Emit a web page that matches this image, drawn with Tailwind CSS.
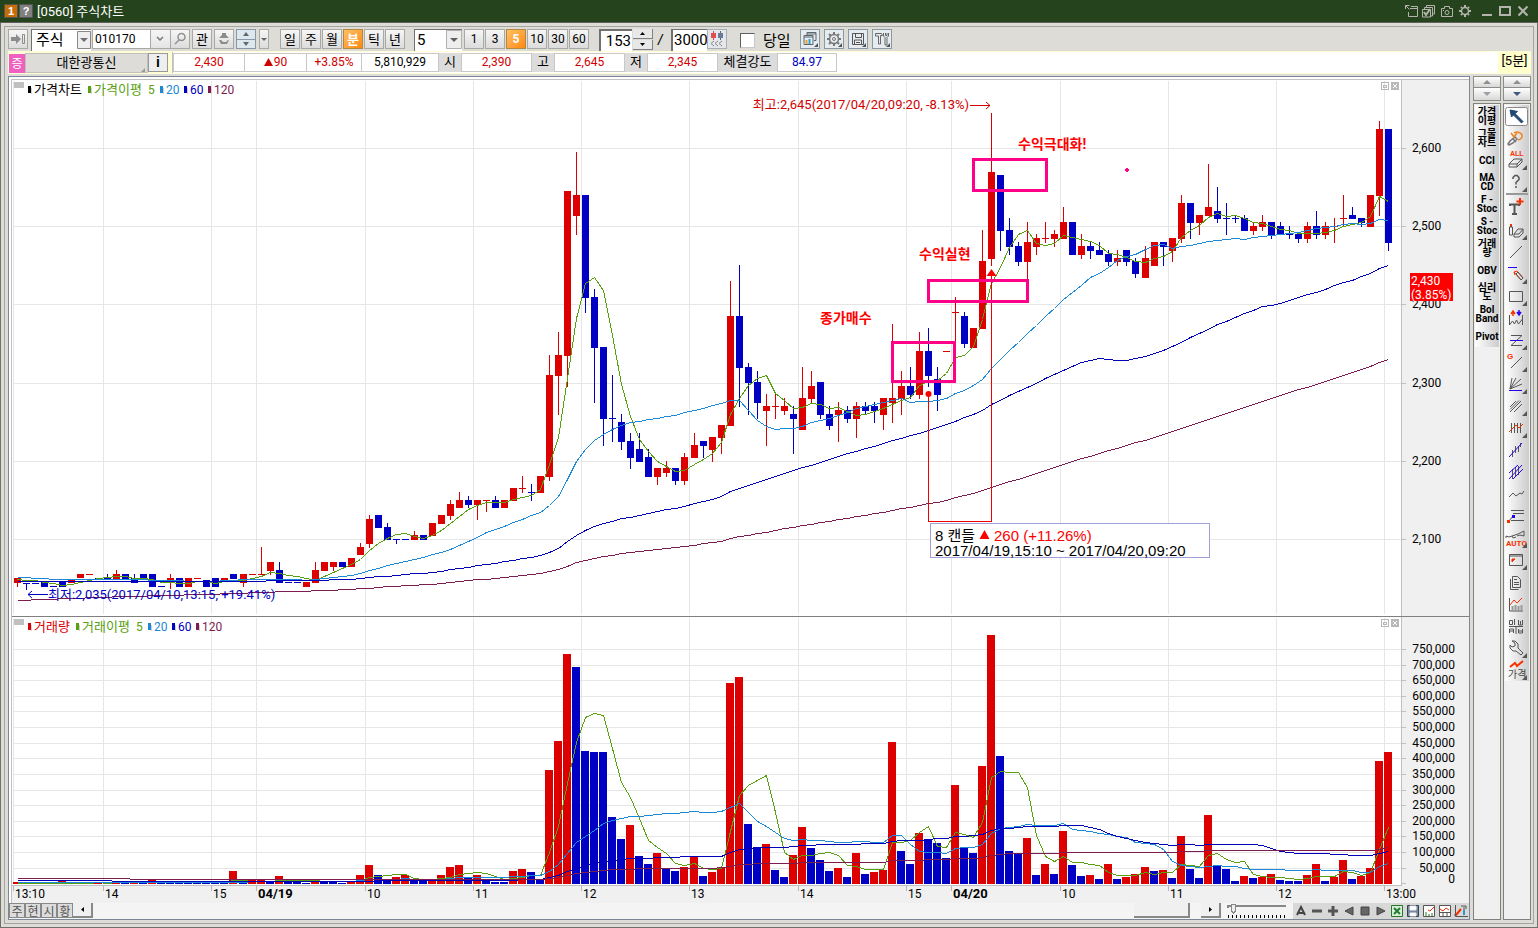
<!DOCTYPE html>
<html lang="ko">
<head>
<meta charset="utf-8">
<title>[0560] 주식차트</title>
<script src="https://cdn.jsdelivr.net/npm/@tailwindcss/browser@4"></script>
</head>
<body class="flex h-screen flex-col overflow-hidden bg-[#dddcd6] font-[Roboto,'Noto_Sans_CJK_KR',sans-serif] text-[13px] text-black">

<header class="flex h-[23px] shrink-0 items-center border-b border-[#60605c] bg-[#25441d] px-[5px] pr-[7px] text-white">
  <span class="flex h-3 w-3 items-center justify-center bg-[#c86c08] font-['Liberation_Sans'] text-[11px] font-bold leading-none outline outline-[#554]">1</span>
  <button class="ml-[3px] flex h-3 w-3 items-center justify-center bg-[#808080] font-['Liberation_Sans'] text-[11px] font-bold leading-none outline outline-[#555]" aria-label="도움말">?</button>
  <h1 class="ml-[5px] font-[Roboto,'Noto_Sans_CJK_KR'] text-[13px] leading-none">[0560] 주식차트</h1>
  <div class="ml-auto flex items-center gap-[2px] text-[#b4b4ac]">
    <button aria-label="분리"><svg class="h-4 w-4" viewBox="0 0 16 16" fill="none" stroke="currentColor"><path d="M2.500 6V2.500h4M2.500 2.500l4 4M7 5.500h7.500M5.500 9v4.500h9V5M8 3.500h6.500V6"/></svg></button>
    <button aria-label="복사"><svg class="h-4 w-4" viewBox="0 0 16 16" fill="none" stroke="currentColor"><path d="M5.500 4V2.500h8V11H12M3.500 6V4.500h8V13H10M1.500 6.500h8v7.500h-8z"/><path d="M3 9l2 3 4-6" stroke-width="2"/></svg></button>
    <button aria-label="캡처"><svg class="h-4 w-4" viewBox="0 0 16 16" fill="none" stroke="currentColor"><path d="M2.500 5.500h3v-2h5v2h3v8h-11z"/><circle cx="8" cy="9.500" r="2"/><path d="M4 7.500h1"/></svg></button>
    <button aria-label="설정"><svg class="h-4 w-4" viewBox="0 0 16 16" fill="none" stroke="currentColor"><circle cx="8" cy="8" r="3.500" stroke-width="1.500"/><path d="M8 2v2M8 12v2M2 8h2M12 8h2M4 4l1 1M11 11l1 1M12 4l-1 1M4 12l1-1" stroke-width="2"/></svg></button>
    <button aria-label="최소화" class="ml-1"><svg class="h-4 w-4" viewBox="0 0 16 16" stroke="currentColor"><path d="M3 12h10" stroke-width="2"/></svg></button>
    <button aria-label="최대화"><svg class="h-4 w-4" viewBox="0 0 16 16" fill="none" stroke="currentColor"><path d="M3 4h10v8H3z" stroke-width="2"/></svg></button>
    <button aria-label="닫기"><svg class="h-4 w-4" viewBox="0 0 16 16" stroke="currentColor"><path d="M3.500 3.500l9 9M12.500 3.500l-9 9" stroke-width="2"/></svg></button>
  </div>
</header>

<div class="flex min-h-0 flex-1 flex-col border border-t-0 border-[#70706c] p-[3px]">
<div class="flex min-h-0 flex-1 flex-col border border-[#a4a4a0] pb-[3px] pl-[3px] pr-[2px]">

  <form class="flex h-6 shrink-0 items-start pt-[2px] font-['Noto_Sans_CJK_KR'] text-[12px]" onsubmit="return false">
    <button aria-label="펼치기" class="h-5 w-5 border border-[#a8a8a4] bg-linear-to-b from-[#f6f6f6] to-[#dcdcdc]"><svg viewBox="0 0 18 18" class="h-[18px] w-[18px]" fill="#8c8c8c"><path d="M2 7h5V4l5 5-5 5v-3H2z"/><path d="M13.500 4.500h2v9h-2z" fill="none" stroke="#8c8c8c"/></svg></button>
    <label class="relative ml-[3px] block h-[22px] w-[60px] border-l border-t border-[#707070] bg-white">
      <span class="sr-only">종목 구분</span>
      <select class="h-[21px] w-full appearance-none bg-transparent pl-1 font-[Roboto,'Noto_Sans_CJK_KR'] text-[15px] leading-[21px] outline-none"><option>주식</option></select>
      <svg class="pointer-events-none absolute right-0 top-px h-[18px] w-[14px] bg-[#eee]" viewBox="0 0 14 18"><path d="M.5.500h13v17H.5z" fill="none" stroke="#888"/><path d="M3 7h8l-4 4z" fill="#707070"/></svg>
    </label>
    <input aria-label="종목코드" value="010170" class="ml-px h-5 w-[59px] border border-[#a8a8a4] bg-white pl-[2px] font-[Roboto] text-[12px] outline-none">
    <button aria-label="종목 목록" class="h-5 w-[19px] border-y border-[#a8a8a4] bg-linear-to-b from-[#f6f6f6] to-[#e4e4e4]"><svg viewBox="0 0 18 18" class="h-[18px] w-[18px]" fill="none" stroke="#777" stroke-width="1.500"><path d="M6 7l3 3 3-3"/></svg></button>
    <button aria-label="검색" class="h-5 w-5 border border-[#a8a8a4] bg-linear-to-b from-[#f6f6f6] to-[#dcdcdc]"><svg viewBox="0 0 18 18" class="h-[18px] w-[18px]" fill="none" stroke="#909090" stroke-width="1.500"><circle cx="10.500" cy="7" r="3.500"/><path d="M8 10l-4 4"/></svg></button>
    <button class="ml-[2px] h-5 w-5 border border-[#a8a8a4] bg-linear-to-b from-[#f6f6f6] to-[#dcdcdc] text-[13px] leading-[18px]">관</button>
    <button aria-label="알림" class="ml-[2px] h-5 w-5 border border-[#a8a8a4] bg-linear-to-b from-[#f6f6f6] to-[#dcdcdc]"><svg viewBox="0 0 18 18" class="h-[18px] w-[18px]" fill="#8c8c8c"><path d="M7 3h4v2l3 3H4l3-3zM4 10h2l2 2h3l2-2h1l-2 4H6z"/></svg></button>
    <div class="ml-[2px] flex h-5 w-5 flex-col border border-[#8898a4] bg-[#dde8ee]">
      <button aria-label="이전" class="flex flex-1 items-center justify-center border-b border-[#8898a4]"><svg class="h-1 w-[6px]" viewBox="0 0 6 4" fill="#606870"><path d="M0 4l3-4 3 4z"/></svg></button>
      <button aria-label="다음" class="flex flex-1 items-center justify-center"><svg class="h-1 w-[6px]" viewBox="0 0 6 4" fill="#606870"><path d="M0 0h6L3 4z"/></svg></button>
    </div>
    <button aria-label="더보기" class="ml-[3px] flex h-5 w-[10px] items-center justify-center border border-[#a8a8a4] bg-linear-to-b from-[#f6f6f6] to-[#dcdcdc]"><svg class="h-[3px] w-[6px]" viewBox="0 0 6 3" fill="#666"><path d="M0 0h6L3 3z"/></svg></button>
    <div class="ml-[11px] flex gap-px text-[13px]">
      <button class="h-5 w-5 border border-[#a8a8a4] bg-linear-to-b from-[#f6f6f6] to-[#dcdcdc] leading-[18px]">일</button>
      <button class="h-5 w-5 border border-[#a8a8a4] bg-linear-to-b from-[#f6f6f6] to-[#dcdcdc] leading-[18px]">주</button>
      <button class="h-5 w-5 border border-[#a8a8a4] bg-linear-to-b from-[#f6f6f6] to-[#dcdcdc] leading-[18px]">월</button>
      <button class="h-5 w-5 border border-[#b08840] bg-linear-to-br from-[#ffc060] to-[#ff8800] font-bold leading-[18px] text-white">분</button>
      <button class="h-5 w-5 border border-[#a8a8a4] bg-linear-to-b from-[#f6f6f6] to-[#dcdcdc] leading-[18px]">틱</button>
      <button class="h-5 w-5 border border-[#a8a8a4] bg-linear-to-b from-[#f6f6f6] to-[#dcdcdc] leading-[18px]">년</button>
    </div>
    <label class="relative ml-[9px] block h-[22px] w-[48px] border-l border-t border-[#707070] bg-white">
      <span class="sr-only">분 간격</span>
      <select class="h-[21px] w-full appearance-none bg-transparent pl-[2px] font-[Roboto] text-[15px] leading-[21px] outline-none"><option>5</option></select>
      <svg class="pointer-events-none absolute right-0 top-0 h-[19px] w-4 bg-[#eee]" viewBox="0 0 16 19"><path d="M.5.500h15v18H.5z" fill="none" stroke="#b0b0ac"/><path d="M4 8h8l-4 4z" fill="#606060"/></svg>
    </label>
    <div class="ml-[2px] flex gap-px font-[Roboto] text-[12px]">
      <button class="h-5 w-5 border border-[#a8a8a4] bg-linear-to-b from-[#f6f6f6] to-[#dcdcdc] leading-[18px]">1</button>
      <button class="h-5 w-5 border border-[#a8a8a4] bg-linear-to-b from-[#f6f6f6] to-[#dcdcdc] leading-[18px]">3</button>
      <button class="h-5 w-5 border border-[#b08840] bg-linear-to-br from-[#ffc060] to-[#ff8800] font-bold leading-[18px] text-white">5</button>
      <button class="h-5 w-5 border border-[#a8a8a4] bg-linear-to-b from-[#f6f6f6] to-[#dcdcdc] leading-[18px]">10</button>
      <button class="h-5 w-5 border border-[#a8a8a4] bg-linear-to-b from-[#f6f6f6] to-[#dcdcdc] leading-[18px]">30</button>
      <button class="h-5 w-5 border border-[#a8a8a4] bg-linear-to-b from-[#f6f6f6] to-[#dcdcdc] leading-[18px]">60</button>
    </div>
    <input aria-label="표시 개수" value="153" class="ml-[10px] h-[22px] w-[33px] border-l-2 border-t-2 border-[#707070] bg-white pr-px text-right font-[Roboto] text-[15px] outline-none">
    <div class="flex h-[21px] w-[21px] flex-col gap-px pl-px">
      <button aria-label="증가" class="flex flex-1 items-center justify-center border-b border-r border-[#808080] bg-[#e8e8e8]"><svg class="h-[3px] w-[5px]" viewBox="0 0 5 3"><path d="M0 3l2.500-3L5 3z"/></svg></button>
      <button aria-label="감소" class="flex flex-1 items-center justify-center border-b border-r border-[#808080] bg-[#e8e8e8]"><svg class="h-[3px] w-[5px]" viewBox="0 0 5 3"><path d="M0 0h5L2.500 3z"/></svg></button>
    </div>
    <span class="ml-[5px] w-[13px] font-['Liberation_Sans'] text-[15px] italic leading-[22px]">/</span>
    <input aria-label="전체 개수" value="3000" class="h-[22px] w-[36px] border-l-2 border-t border-[#707070] bg-white pl-px font-[Roboto] text-[15px] outline-none">
    <button aria-label="과거 조회" class="h-5 w-5 border border-[#a8b0b4] bg-[#e4e8ec]"><svg viewBox="0 0 18 18" class="h-[18px] w-[18px]"><path d="M5.500 1v9" stroke="#d44"/><path d="M3 3h5v5H3z" fill="#e05050"/><path d="M12.500 1v9" stroke="#567"/><path d="M10 3h5v5h-5z" fill="#667c98"/><path d="M6 11l-3 2.500L6 16M10 11l-3 2.500 3 2.500M14 11l-3 2.500 3 2.500" fill="none" stroke="#888"/></svg></button>
    <label class="ml-[13px] flex h-[22px] items-center gap-2 text-[15px]"><input type="checkbox" class="h-[15px] w-[15px] appearance-none border border-[#c8c8c8] border-l-[#606060] border-t-[#606060] bg-white">당일</label>
    <div class="ml-[9px] flex gap-1">
      <button aria-label="차트 창" class="h-5 w-5 border border-[#8898a4] bg-[#e6ebef]"><svg viewBox="0 0 18 18" class="h-[18px] w-[18px]" fill="none" stroke="#5c6470"><path d="M6 5V2.500h9v8H13M6 4h9M3 13.500v-8h9v9H3zM3 7h9"/><path d="M5.500 14v-4" stroke="#f0a020" stroke-width="2"/><path d="M8.500 14V9" stroke="#28a0d8" stroke-width="2"/><path d="M17 13v4h-4z" fill="#555" stroke="none"/></svg></button>
      <button aria-label="차트 설정" class="h-5 w-5 border border-[#8898a4] bg-[#e6ebef]"><svg viewBox="0 0 18 18" class="h-[18px] w-[18px]" fill="none" stroke="#777"><circle cx="9" cy="9" r="4.500" stroke-width="1.500"/><circle cx="9" cy="9" r="1.500"/><path d="M9 2v2M9 14v2M2 9h2M14 9h2M4 4l1.500 1.500M12.500 12.500L14 14M14 4l-1.500 1.500M4 14l1.500-1.500" stroke-width="2"/><path d="M17 13v4h-4z" fill="#555" stroke="none"/></svg></button>
      <button aria-label="저장" class="h-5 w-5 border border-[#8898a4] bg-[#e6ebef]"><svg viewBox="0 0 18 18" class="h-[18px] w-[18px]" fill="none" stroke="#555"><path d="M3.500 3.500h11v11h-11zM6.500 4v3.500h6V4M5.500 14v-4h7v4M7 12.500h4"/><path d="M17 13v4h-4z" fill="#555" stroke="none"/></svg></button>
      <button aria-label="도구" class="h-5 w-5 border border-[#8898a4] bg-[#e6ebef]"><svg viewBox="0 0 18 18" class="h-[18px] w-[18px]" fill="none" stroke="#666"><path d="M2.500 3.500h6l1 2H7.500V14h-2V6h-3zM10.500 3v3l1.500 1.500V15h2V7.500L15.500 6V3M12.500 3v2.500h1.500V3"/><path d="M17 13v4h-4z" fill="#555" stroke="none"/></svg></button>
    </div>
  </form>

  <section aria-label="현재가" class="flex h-[23px] shrink-0 border-y border-[#fffcd8] bg-white leading-[17px]">
    <div class="flex w-[164px] shrink-0 bg-[#fffdd4] pt-px">
      <span class="ml-px mt-px h-[19px] w-4 bg-[#f060c0] text-center font-['Noto_Sans_CJK_KR'] text-[12px] leading-[18px] text-white">증</span>
      <button class="relative h-5 w-[123px] border border-[#c0c0b8] bg-[#dddcd8] text-center leading-[18px]">대한광통신<svg class="absolute bottom-0 right-[2px] h-1 w-1" viewBox="0 0 4 4" fill="#999"><path d="M4 0v4H0z"/></svg></button>
      <button aria-label="종목정보" class="h-[19px] w-5 border border-[#999] bg-[#eee] font-['Liberation_Sans'] text-[14px] font-bold leading-[17px]">i</button>
    </div>
    <div class="flex border-l border-[#c0c0c0] pt-px text-center text-[12px]">
      <span class="h-[19px] w-[72px] border border-[#c8c8c8] text-[#d00000]">2,430</span>
      <span class="h-[19px] w-[62px] border border-l-0 border-[#c8c8c8] text-[#d00000]"><svg class="mr-px inline h-2 w-[9px] align-baseline" viewBox="0 0 9 8" fill="#d00000"><path d="M4.500 0L9 8H0z"/></svg>90</span>
      <span class="h-[19px] w-[55px] border border-l-0 border-[#c8c8c8] text-[#d00000]">+3.85%</span>
      <span class="h-[19px] w-[77px] border border-l-0 border-[#c8c8c8]">5,810,929</span>
      <span class="h-[19px] w-[22px] bg-[#dcdcdc] text-[13px]">시</span>
      <span class="h-[19px] w-[71px] border border-[#c8c8c8] text-[#d00000]">2,390</span>
      <span class="h-[19px] w-[22px] bg-[#dcdcdc] text-[13px]">고</span>
      <span class="h-[19px] w-[71px] border border-[#c8c8c8] text-[#d00000]">2,645</span>
      <span class="h-[19px] w-[22px] bg-[#dcdcdc] text-[13px]">저</span>
      <span class="h-[19px] w-[71px] border border-[#c8c8c8] text-[#d00000]">2,345</span>
      <span class="h-[19px] w-[59px] bg-[#dcdcdc] text-[13px]">체결강도</span>
      <span class="h-[19px] w-[60px] border border-[#c8c8c8] text-[#0000c0]">84.97</span>
    </div>
    <span class="ml-auto w-[33px] bg-[#ffffcc] text-center text-[13px]">[5분]</span>
  </section>

  <main class="mt-[2px] flex min-h-0 flex-1 gap-[3px]">
    <section class="flex min-w-0 flex-1 flex-col border border-[#7c8898] bg-white pl-[2px] pt-[2px]">
      <svg id="chart" class="min-h-0 w-full flex-1 border-l border-t border-[#c0c0c0] text-[13px]" viewBox="12 80 1457 823" preserveAspectRatio="xMinYMin meet" role="img" aria-label="가격차트와 거래량"></svg>
      <div class="flex h-4 shrink-0 bg-[#f4f4f4] text-[12px] leading-[13px]">
        <div class="-ml-[2px] flex font-['Noto_Sans_CJK_KR'] text-[#555]">
          <button class="h-[15px] w-4 border border-[#888] bg-[#dcdcdc] leading-[12px]">주</button>
          <button class="h-[15px] w-4 border border-[#888] bg-[#dcdcdc] leading-[12px]">현</button>
          <button class="h-[15px] w-4 border border-[#888] bg-[#dcdcdc] leading-[12px]">시</button>
          <button class="h-[15px] w-4 border border-[#888] bg-[#dcdcdc] leading-[12px]">황</button>
        </div>
        <button aria-label="왼쪽으로" class="flex h-[15px] w-5 items-center justify-center border-b-2 border-r-2 border-[#888] bg-[#f0f0f0]"><svg class="h-[5px] w-[3px]" viewBox="0 0 3 5"><path d="M3 0v5L0 2.500z"/></svg></button>
        <div class="flex flex-1 justify-end pr-[11px]"><div class="h-[15px] w-14 border-b-2 border-r-2 border-[#888] bg-[#f0f0f0]"></div></div>
        <button aria-label="오른쪽으로" class="flex h-[15px] w-5 items-center justify-center border-b-2 border-r-2 border-[#888] bg-[#f0f0f0]"><svg class="h-[5px] w-[3px]" viewBox="0 0 3 5"><path d="M0 0v5l3-2.500z"/></svg></button>
        <svg class="ml-[5px] h-[15px] w-16" viewBox="1226 903 64 15" shape-rendering="crispEdges"><path d="M1227.500 908v-2.500H1286" fill="none" stroke="#888" stroke-width="2"/><path d="M1231.500 904v7l2 2 2-2v-7z" fill="#eee" stroke="#888"/><path d="M1228 916.500h60" stroke="#000" stroke-width="3" stroke-dasharray="1 3"/></svg>
        <div id="tools" class="ml-[3px] flex w-[176px] bg-[#d8d8d8]"></div>
      </div>
    </section>

    <aside aria-label="지표" class="flex w-7 shrink-0 flex-col">
      <button aria-label="지표 위로" class="flex h-3 items-center justify-center border border-[#8c8c88] bg-linear-to-b from-white to-[#d8d8d8]"><svg class="h-1 w-2" viewBox="0 0 8 4" fill="#909090"><path d="M4 0l4 4H0z"/></svg></button>
      <button aria-label="지표 아래로" class="flex h-[13px] items-center justify-center border border-t-0 border-[#8c8c88] bg-linear-to-b from-white to-[#d8d8d8]"><svg class="h-1 w-2" viewBox="0 0 8 4" fill="#a0a0a0"><path d="M0 0h8L4 4z"/></svg></button>
      <div id="indicators" class="mt-[2px] flex flex-1 flex-col border border-[#80807c] bg-[#f0f0f0]"></div>
    </aside>

    <aside aria-label="그리기 도구" class="-ml-px flex w-7 shrink-0 flex-col">
      <button aria-label="도구 위로" class="flex h-3 items-center justify-center border border-[#8c8c88] bg-linear-to-b from-white to-[#d8d8d8]"><svg class="h-1 w-2" viewBox="0 0 8 4" fill="#909090"><path d="M4 0l4 4H0z"/></svg></button>
      <button aria-label="도구 아래로" class="flex h-[13px] items-center justify-center border border-t-0 border-[#8c8c88] bg-linear-to-b from-white to-[#d8d8d8]"><svg class="h-1 w-2" viewBox="0 0 8 4" fill="#405880"><path d="M0 0h8L4 4z"/></svg></button>
      <div id="drawing" class="mt-[2px] flex flex-1 flex-col border border-[#80807c] bg-[#f0f0f0]"></div>
    </aside>
  </main>
</div>
</div>

<script>
// Candles: direction, high, body top, body bottom, low (chart units, y grows downward)
const candles = `r578,578,583,587 b583,583,584,590 b583,583,584,584 b581,581,587,587 b586,586,587,587 b582,582,587,587 r579,579,583,583 r574,574,578,578 r574,574,575,575 b578,578,579,579
b574,578,579,579 r570,574,579,579 b574,574,579,579 b574,578,583,583 b574,574,578,578 b574,574,587,587 b586,586,587,587 r574,578,581,589 b578,578,587,587 r578,578,587,587
r578,578,579,579 b580,580,587,587 b578,578,587,587 r578,578,582,582 b574,574,579,579 r574,574,583,587 r574,574,575,575 r547,574,575,575 r562,562,571,575 b562,570,583,583
b582,582,583,583 b582,582,583,583 r582,582,587,587 r562,570,583,583 r562,562,571,571 r562,562,567,571 b562,562,567,567 r558,558,567,567 r543,547,555,555 r515,519,544,548
b515,515,528,528 b523,527,540,540 b539,539,540,544 b539,539,540,540 r531,535,540,540 b535,535,540,540 r523,523,536,536 r515,515,524,524 r500,504,516,520 r492,500,508,508
b496,500,505,508 r500,500,505,520 r500,500,501,512 b496,500,508,508 r500,500,508,508 r488,488,501,501 r476,488,489,493 b484,492,493,501 r476,476,493,493 r355,375,477,481
r332,355,376,415 r191,191,356,387 r152,195,216,235 b195,195,298,313 b289,297,348,403 b347,347,419,446 b375,418,419,442 b414,422,442,450 b433,441,458,469 b433,449,462,462
b449,457,477,477 r468,468,477,485 r461,468,473,477 b468,468,481,485 r453,457,481,485 r433,445,458,458 b441,441,446,458 r437,437,450,462 r425,425,438,454 r281,316,426,426
b265,316,368,407 b363,367,383,415 b371,382,403,419 r394,406,411,446 r394,406,407,419 r398,406,411,415 b406,414,419,454 r367,398,430,430 r371,386,399,403 b382,382,415,419
b406,414,426,430 r402,410,415,442 b406,410,419,423 r402,406,419,438 b402,406,411,415 b402,406,411,423 r398,398,415,430 r324,398,403,423 r371,386,399,415 b367,386,395,399
r332,351,395,399 b328,351,376,387 b367,379,395,411 r351,351,352,352 r297,312,313,342 b312,316,344,348 r328,328,348,348 r230,261,329,329 r113,172,259,266 b175,175,231,251
b218,230,247,255 b242,246,262,266 r222,242,262,280 r234,238,247,255 r222,238,239,243 r230,234,239,247 r207,222,239,239 b222,222,255,255 r234,246,255,259 b242,246,251,259
b242,250,255,255 b250,254,262,266 r250,258,262,266 b250,250,262,266 b258,261,274,278 r246,258,278,278 r242,242,266,266 b242,242,247,266 r238,238,251,262 r195,203,239,243
b203,203,223,239 r215,215,223,235 r164,207,216,216 b187,211,219,223 b203,218,219,235 b215,218,219,223 b215,218,231,231 r222,226,231,235 r215,222,227,231 b222,222,236,239
b222,226,235,235 b226,234,235,239 b234,234,239,243 r222,226,239,243 b211,226,235,239 r222,226,235,239 r218,226,227,243 r195,218,219,226 b207,215,219,219 b218,218,223,227
r195,195,227,227 r121,129,196,216 b129,129,243,251`.split(/\s+/).map(s => [s[0], ...s.slice(1).split(',').map(Number)]);

// Top edge of each volume bar
const volumes = `882 883 883 883 883 881 883 883 883 882 883 881 883 881 883 880 882 882 882 882 882 882 882 882 871 881 880 880 881 876 881 881 883 879 881 881 883 881 875 865
875 880 877 875 881 881 880 875 867 865 877 875 880 882 882 871 869 872 880 770 741 654 667 751 752 752 817 839 825 856 864 853 869 871 867 857 876 872 867 683
677 824 847 844 870 877 855 827 848 860 871 868 877 853 874 872 870 742 851 864 833 839 843 858 785 847 853 766 635 756 851 853 838 875 864 874 831 865 876 875
879 864 879 877 874 867 871 870 878 836 869 878 815 865 869 881 876 878 877 874 880 881 881 875 864 881 877 860 879 876 868 761 752`.split(/\s+/).map(Number);

const RED = '#dc0000', BLUE = '#0000c4';
const x = i => 17 + Math.round(i * 9.02);
const rect = (a, b, w, h, f) => `<rect x="${a}" y="${b}" width="${w}" height="${h}" fill="${f}"/>`;
const average = (data, n, before) => {
  const all = [...Array.from({ length: n }, (_, k) => before(k)), ...data];
  return data.map((_, i) => { let s = 0; for (let k = i + 1; k <= i + n; k++) s += all[k]; return s / n; });
};
const line = (ys, c) => `<polyline fill="none" stroke="${c}" points="${ys.map((y, i) => x(i) + '.5,' + (Math.round(y) + .5)).join(' ')}"/>`;
const text = (a, b, s, c = '#000', extra = '') => `<text x="${a}" y="${b}" fill="${c}" ${extra}>${s}</text>`;

let o = rect(12, 80, 1390, 806, '#fff') + rect(1402, 80, 67, 823, '#f0f0f0') + rect(12, 886, 1457, 17, '#f0f0f0');
const hours = [[13, '13:10'], [103, '14'], [211, '15'], [256, '04/19'], [365, '10'], [473, '11'], [581, '12'], [689, '13'], [798, '14'], [906, '15'], [951, '04/20'], [1060, '10'], [1168, '11'], [1276, '12'], [1384, '13:00']];
const prices = [2600, 2500, 2400, 2300, 2200, 2100];
let g = '', t = '';
hours.forEach(([h, s]) => {
  g += rect(h, 81, 1, 533, '#e6e6e6') + rect(h, 618, 1, 266, '#e6e6e6') + rect(h, 886, 1, 5, '#b8b8b8');
  t += text(h + 2, 898, s, '#000', s.includes('/') ? 'class="text-[13px] font-bold"' : 'class="text-[12px]"');
});
prices.forEach((p, k) => {
  const y = Math.round(148 + k * 78.2);
  g += rect(13, y, 1388, 1, '#e6e6e6') + rect(1402, y, 4, 1, '#c0c0c0');
  t += text(1412, y + 4, p.toLocaleString('en-US'), '#000', 'class="text-[12px]"');
});
for (let k = 0; k < 16; k++) {
  const y = Math.round(649 + k * 15.62), v = 750000 - k * 50000;
  if (v) g += rect(13, y, 1388, 1, '#e6e6e6');
  g += rect(1402, y, 4, 1, '#c0c0c0');
  t += text(1455, v ? y + 4 : 883, v.toLocaleString('en-US'), '#000', 'text-anchor="end" class="text-[12px]"');
}
g += rect(1401, 80, 1, 806, '#c0c0c0') + rect(12, 885, 1390, 1, '#c0c0c0') + rect(12, 616, 1457, 1, '#808080');

candles.forEach(([d, hi, top, bot, lo], i) => {
  const c = d === 'r' ? RED : BLUE;
  g += rect(x(i), hi, 1, Math.max(1, lo - hi), c) + rect(x(i) - 3, top, 7, bot - top, c);
});
let vc = RED;
volumes.forEach((v, i) => {
  if (i && v < volumes[i - 1]) vc = RED;
  if (i && v > volumes[i - 1]) vc = BLUE;
  g += rect(x(i) - 4, v, 8, 884 - v, vc);
});
const close = candles.map(c => c[0] === 'r' ? c[2] : c[3] - 1);
g += line(average(close, 5, () => 579), '#58a010') + line(average(close, 20, () => 577), '#1c88d8')
   + line(average(close, 60, () => 581), '#0000b8') + line(average(close, 120, k => 619 - k * 38 / 120), '#7c1c50');
g += line(average(volumes, 5, () => 883), '#58a010') + line(average(volumes, 20, () => 882), '#1c88d8')
   + line(average(volumes, 60, () => 880), '#0000b8') + line(average(volumes, 120, () => 878), '#7c1c50');

// Measured range, marker boxes
g += '<path d="M928.500 394v127.500h63V275" fill="none" stroke="#f00000"/>';
g += '<g fill="none" stroke="#ff0088" stroke-width="3"><rect x="892.500" y="342.500" width="62" height="39"/><rect x="928.500" y="280.500" width="99" height="21"/><rect x="973.500" y="159.500" width="73" height="31"/></g>';
g += rect(1125, 169, 4, 2, '#ff0088') + rect(1126, 168, 2, 4, '#ff0088');
g += '<rect x="930.500" y="523.500" width="279" height="34" fill="#fff" stroke="#a0a0d8"/>';
// Panel handles and window boxes
[82, 619].forEach(y => {
  g += rect(14, y, 10, 6, '#c0c0c0');
  g += `<path d="M1381.500 ${y + .5}h7v7h-7zM1383.500 ${y + 3.5}h3v2h-3z" fill="none" stroke="#b8b8b8"/>` + rect(1391, y, 8, 8, '#b8b8b8');
  t += `<path d="M1393 ${y + 2}l4 4M1397 ${y + 2}l-4 4" stroke="#fff"/>`;
});
[[85, ['#000', '#58a010', '#1c88d8', '#0000c0', '#7c1c50'], [28, 88, 160, 184, 208]], [622, [RED, '#58a010', '#1c88d8', '#0000c0', '#7c1c50'], [28, 76, 148, 172, 196]]]
  .forEach(([y, cs, xs]) => cs.forEach((c, k) => { g += rect(xs[k], y + 1, 3, 7, c) + rect(xs[k] + 3, y + 3, 1, 6, '#d0d0d0'); }));

const legend = (y, xs, labels, cs) => labels.forEach((s, k) => t += text(xs[k], y, s, cs[k], k > 1 ? 'class="text-[12px]"' : ''));
legend(94, [34, 94, 148, 166, 190, 214], ['가격차트', '가격이평', '5', '20', '60', '120'], ['#000', '#58a010', '#58a010', '#1c88d8', '#0000c0', '#7c1c50']);
legend(631, [34, 82, 136, 154, 178, 202], ['거래량', '거래이평', '5', '20', '60', '120'], [RED, '#58a010', '#58a010', '#1c88d8', '#0000c0', '#7c1c50']);

t += text(969, 109, '최고:2,645(2017/04/20,09:20, -8.13%)', '#d00000', 'text-anchor="end"') + '<path d="M970 105.500h20M986 102l4 3.500-4 3.500" fill="none" stroke="#d00000"/>';
t += text(48, 599, '최저:2,035(2017/04/10,13:15, +19.41%)', '#0000c0') + '<path d="M48 594.500H28M32 591l-4 3.500 4 3.500" fill="none" stroke="#0000c0"/>';
t += text(820, 323, '종가매수', '#f00', 'class="text-[14px] font-bold"') + text(919, 259, '수익실현', '#f00', 'class="text-[14px] font-bold"') + text(1018, 149, '수익극대화!', '#f00', 'class="text-[14px] font-bold"');
t += '<circle cx="928.500" cy="394" r="3" fill="#f00"/><path d="M991.500 269l5 7h-10zM984.500 530l5 9h-10z" fill="#f00"/>';
t += text(935, 541, '8 캔들', '#000', `class="font-['Liberation_Sans','Noto_Sans_CJK_KR'] text-[15px]"`) + text(994, 541, '260 (+11.26%)', '#f00', `class="font-['Liberation_Sans'] text-[15px]"`) + text(935, 556, '2017/04/19,15:10 ~ 2017/04/20,09:20', '#000', `class="font-['Liberation_Sans'] text-[15px]"`);
t += rect(1410, 273, 43, 28, '#f00') + text(1411, 285, '2,430', '#fff', 'class="text-[12px]"') + text(1411, 299, '(3.85%)', '#fff', 'class="text-[12px]"');
document.getElementById('chart').innerHTML = o + `<g shape-rendering="crispEdges">${g}</g>` + t;

document.getElementById('indicators').innerHTML = '<div class="mx-px mt-px flex flex-col bg-linear-to-r from-white to-[#cccccc]">' +
  ['가격<br>이평', '그물<br>차트', 'CCI', 'MA<br>CD', 'F -<br>Stoc', 'S -<br>Stoc', '거래<br>량', 'OBV', '심리<br>도', 'Bol<br>Band', 'Pivot']
  .map(s => `<button class="flex h-[22px] items-center justify-center font-[Roboto,'Noto_Sans_CJK_KR'] text-[10px] font-bold leading-[9px]"><span>${s}</span></button>`).join('') + '</div>';

const K = '#555', R = '#f83000', B = '#2800f0';
const p = (d, c = K, w = 1, f = 'none') => `<path d="${d}" stroke="${c}" stroke-width="${w}" fill="${f}"/>`;
const corner = '<path d="M22 16v5h-5z" fill="#555"/>';
const icons = [
  ['선택', '<rect x="0.500" y="2.500" width="22" height="18" rx="2" fill="#fff" stroke="#888"/>' + p('M5 5l1.500 7 2-2 8 8 1.500-1.500-8-8 2.500-2z', '#204870', 1, '#204870')],
  ['되돌리기', p('M3 17l2-3 5-4 2 2-4 4-4 2zM8 12l3 3', '#777', 1.5) + p('M9 6a5 4 0 1 1 4 7M6 6l3 4 3-4', '#f08018', 1.5)],
  ['전체 지우기', `<text x="5" y="7" fill="${R}" class="font-['Liberation_Sans'] text-[7px] font-bold">ALL</text>` + p('M4 15l5-5h8l-5 5zM4 15v3h8l5-5v-3M12 15v3') + corner],
  ['도움말', p('M8 8V6.500l2-2h2l2 2v2l-3 3v2M11 15v2', K, 1.500) + corner],
  ['텍스트', p('M5 9V7.500h9V9M9.500 8v9M7 17h5', K, 2) + p('M15 1v7M11.500 4.500h7', R, 2)],
  ['지우개', p('M4.500 16V8h3v8zM5.500 8V6h1v2M9 15l4-5h5l-4 5zM9 15v3h5l4-4v-4') + p('M6 5v2', R, 2) + corner],
  ['추세선', p('M5 17L17 5')],
  ['펜', p('M3 4.500h9', B) + p('M9 9l3-1 6 7-2 2zM9 9l1 3', R) + p('M11 11l2-2 5 6-2 2z') + corner],
  ['사각형', p('M4.500 6.500h13v10h-13z') + corner],
  ['변동선', p('M4.500 8v10l3-4 2 3 2-4 2 4 4-5v6M17.500 8v6') + p('M8 5v4M6 7l2-3 2 3', R, 1.500) + p('M14 3v4M12 5l2 3 2-3', B, 1.500)],
  ['수평 구간', p('M6 6.500h11L6 16.500h11') + p('M5 11.500h13', B) + corner],
  ['골든크로스', `<text x="2" y="8" fill="${R}" class="font-['Liberation_Sans'] text-[8px] font-bold">G</text>` + p('M6 17L17 6') + corner],
  ['팬', p('M5 16L7 5M5 16l6-11M5 16L16 6M5 16l12-5') + p('M4 17.500h13', B) + corner],
  ['평행선', p('M5 12l6-6M5 17L16 6M9 17l8-8M5 14.500l9-9') + corner],
  ['주기', p('M6.500 6v10M9.500 6v10M12.500 6v10M15.500 6v10') + p('M4 15l7-7 3 3 4-4', R) + corner],
  ['회귀선', p('M7.500 11v7M10.500 7v7M13.500 7v6M15.500 4v4') + p('M4 18L17 4', B)],
  ['회귀 채널', p('M7.500 8v10M10.500 6v10M13.500 5v9') + p('M4 18L17 4M4 12l9-8M8 18L18 8', B)],
  ['지그재그', p('M4 14l4-4 3 3 4-3 2 1 2-3')],
  ['조정선', p('M6 5.500h13M8 8.500h11M6 15.500h13M4 16l4-5') + p('M2 16.500h3', R, 3) + p('M7 11.500h3', B, 3)],
  ['자동', p('M1 9l3 1 9-3 6-3v5l-4-1-3 1M7 9l1 2 3-1M1 9v2') + `<text x="1" y="19" fill="${R}" class="font-[Roboto] text-[8px] font-bold">AUTO</text>` + corner],
  ['창', p('M4.500 5.500h13v11h-13zM4 7h14', K) + p('M7 10h3l-3 3z', R, 1, R) + corner],
  ['메모', p('M7.500 16.500h8v-8l-3-3h-5v11M5.500 8v10.500h8M9 8.500h3M9 11.500h5M9 13.500h5')],
  ['지표', p('M4.500 5v13H18') + p('M7.500 18v-5M10.500 18v-6M13.500 18v-5M16.500 18v-6', '#999', 2) + p('M5 12l4-5 3 3 5-5', R)],
  ['분할', p('M4.500 5.500h3v4h-3zM9.500 4v6M13.500 5v5h2V6v4h2V5M4 11.500h14M4.500 18v-4h4v4M4.500 16h4M11 12v7M13.500 14v4h4v-4M13.500 16h4')],
  ['환경설정', p('M7 4l3 2v3l-3 1-2-2 0 3 3 3h3l5 4 2-2-5-5V7l-3-3z', K) + corner],
  ['가격', p('M5 8l5-4 2 3 6-5', R, 2) + `<text x="3" y="19" fill="#444" class="font-['Noto_Sans_CJK_KR'] text-[10px]">가격</text>` + corner]
];
document.getElementById('drawing').innerHTML = '<div class="mx-px mt-px flex flex-col bg-linear-to-r from-white to-[#cccccc]">' + icons.map(([n, s], k) =>
  `<button aria-label="${n}" class="h-[22px] w-6"><svg class="h-[22px] w-6" viewBox="0 0 24 22">${s}</svg></button>` + (k === 3 ? '<hr class="mx-px h-1 border-0 border-t-2 border-[#999]">' : '')).join('') + '</div>';

const small = [
  ['자동', p('M4 12L8 4l4 8M6 10h5', '#444', 2)], ['축소', p('M3 8h10', K, 3)], ['확대', p('M3 8h10M8 3v10', K, 3)],
  ['이전', p('M12 4v8L4 8z', '#444', 1, '#666')], ['정지', p('M4 4h8v8H4z', '#444', 1, '#666')], ['다음', p('M4 4v8l8-4z', '#444', 1, '#666')],
  ['엑셀', p('M2.500 2.500h11v11h-11z', '#287828', 1, '#d8f0d8') + p('M5 5l6 6M11 5l-6 6', '#208030', 2)],
  ['저장', p('M2.500 2.500h11v11h-11z', '#345', 1, '#7888a0') + p('M5 3h6v4H5zM5 10h6v3H5z', '#eee', 1, '#fff')],
  ['차트', p('M2.500 2.500h11v11h-11z', K, 1, '#fff') + p('M7 7l2 1 4-4', R) + p('M5 13V9M8 13v-2M11 13v-3', '#208020')],
  ['표', p('M2.500 2.500h11v11h-11z', K, 1, '#fff') + p('M3 6l3 2 3-3 3 2', R) + p('M3 9.500h10M6 10v4M10 10v4')],
  ['도구', p('M2.500 2v11.500H15M1 12h3', K) + p('M3 12l5-6', R, 2) + p('M8 3h5v3M11 4v3') + p('M11 7v5', '#2898c8', 2)]
];
document.getElementById('tools').innerHTML = small.map(([n, s]) => `<button aria-label="${n}" class="h-4 w-4"><svg class="h-4 w-4" viewBox="0 0 16 16">${s}</svg></button>`).join('');
</script>
</body>
</html>
